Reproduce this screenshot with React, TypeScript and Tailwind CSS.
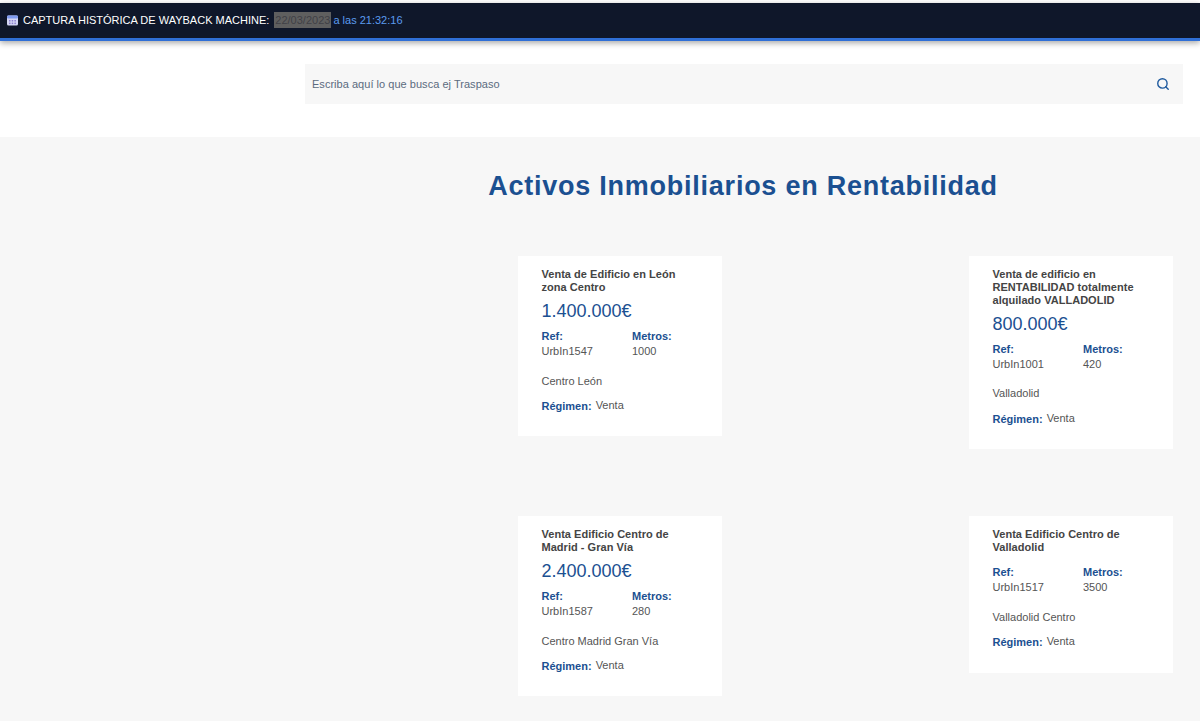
import React from 'react';
import { Search } from 'lucide-react';

type Item = {
  title: string[];
  price: string;
  ref: string;
  metros: string;
  place: string;
};

const ITEMS: Item[] = [
  { title: ['Venta de Edificio en León', 'zona Centro'], price: '1.400.000€', ref: 'UrbIn1547', metros: '1000', place: 'Centro León' },
  { title: ['Venta de edificio en', 'RENTABILIDAD totalmente', 'alquilado VALLADOLID'], price: '800.000€', ref: 'UrbIn1001', metros: '420', place: 'Valladolid' },
  { title: ['Venta Edificio Centro de', 'Madrid - Gran Vía'], price: '2.400.000€', ref: 'UrbIn1587', metros: '280', place: 'Centro Madrid Gran Vía' },
  { title: ['Venta Edificio Centro de', 'Valladolid'], price: '', ref: 'UrbIn1517', metros: '3500', place: 'Valladolid Centro' },
];

function Card({ item }: { item: Item }) {
  return (
    <div className="min-h-[157px] w-[204px] bg-white pl-[23.5px] pr-4 pt-3 pb-[22px] text-[#555]">
      <h3 className="text-[11px] font-bold leading-[12.75px] tracking-[0.03px] text-[#444]">
        {item.title.map((line) => (
          <div key={line}>{line}</div>
        ))}
      </h3>
      {item.price ? (
        <p className="mt-[5.5px] text-[18px] leading-[24px] text-[#1b5091]">{item.price}</p>
      ) : (
        <div className="h-[5.5px]" />
      )}
      <div className="mt-[6px] grid grid-cols-[90.5px_1fr] text-[11px] leading-[14.75px]">
        <div>
          <p className="font-bold text-[#1b5091]">Ref:</p>
          <p>{item.ref}</p>
        </div>
        <div>
          <p className="font-bold text-[#1b5091]">Metros:</p>
          <p>{item.metros}</p>
        </div>
      </div>
      <p className="mt-[15px] text-[11px] leading-[15px]">{item.place}</p>
      <div className="mt-[9.4px] flex items-start gap-1 text-[11px] leading-[15px]">
        <span className="mt-px font-bold text-[#1b5091]">Régimen:</span>
        <span>Venta</span>
      </div>
    </div>
  );
}

export default function App() {
  return (
    <div className="flex h-[721px] flex-col overflow-hidden bg-white font-['Liberation_Sans',sans-serif]">
      <div className="mt-[3px] flex h-[38px] items-center gap-[5px] border-b-[3px] border-[#2f6fd6] bg-[#0f172a] pb-px pl-[7px] text-[11px] shadow-[0_2px_6px_rgba(0,0,0,0.35)]">
        <svg width="11" height="11" viewBox="0 0 11 11" aria-hidden="true">
          <rect x="0" y="0.5" width="11" height="10" rx="1.5" fill="#d3d6f5" />
          <rect x="0" y="0.5" width="11" height="3" rx="1" fill="#7f9bef" />
          <rect x="2" y="5" width="1.5" height="1.5" fill="#8a7fd0" />
          <rect x="4.7" y="5" width="1.5" height="1.5" fill="#8a7fd0" />
          <rect x="7.4" y="5" width="1.5" height="1.5" fill="#8a7fd0" />
          <rect x="2" y="7.6" width="1.5" height="1.5" fill="#8a7fd0" />
          <rect x="4.7" y="7.6" width="1.5" height="1.5" fill="#8a7fd0" />
          <rect x="7.4" y="7.6" width="1.5" height="1.5" fill="#8a7fd0" />
        </svg>
        <span className="text-white">CAPTURA HISTÓRICA DE WAYBACK MACHINE:</span>
        <span className="bg-[#5f5f5f] px-px text-[#3f3f46]">22/03/2023</span>
        <span className="-ml-[3px] text-[#5b9bef]">a las 21:32:16</span>
      </div>

      <div className="flex h-[96px] shrink-0 items-start pl-[305px] pr-[17px] pt-[23px]">
        <div className="flex h-10 w-full items-center justify-between bg-[#f7f7f7] pl-[7px] pr-[13px]">
          <span className="text-[11px] tracking-[0.03px] text-[#5b6b80]">Escriba aquí lo que busca ej Traspaso</span>
          <Search className="h-[14px] w-[14px] text-[#1f5a9e]" strokeWidth={2.4} />
        </div>
      </div>

      <div className="flex-1 bg-[#f7f7f7]">
        <h1 className="pl-[286px] pt-[31px] text-center text-[27px] font-bold leading-[36px] tracking-[0.75px] text-[#1b5091]">
          Activos Inmobiliarios en Rentabilidad
        </h1>
        <div className="mt-[52px] ml-[518px] grid grid-cols-[204px_204px] grid-rows-[260px_auto] items-start gap-x-[247px]">
          {ITEMS.map((item) => (
            <Card key={item.ref} item={item} />
          ))}
        </div>
      </div>
    </div>
  );
}
